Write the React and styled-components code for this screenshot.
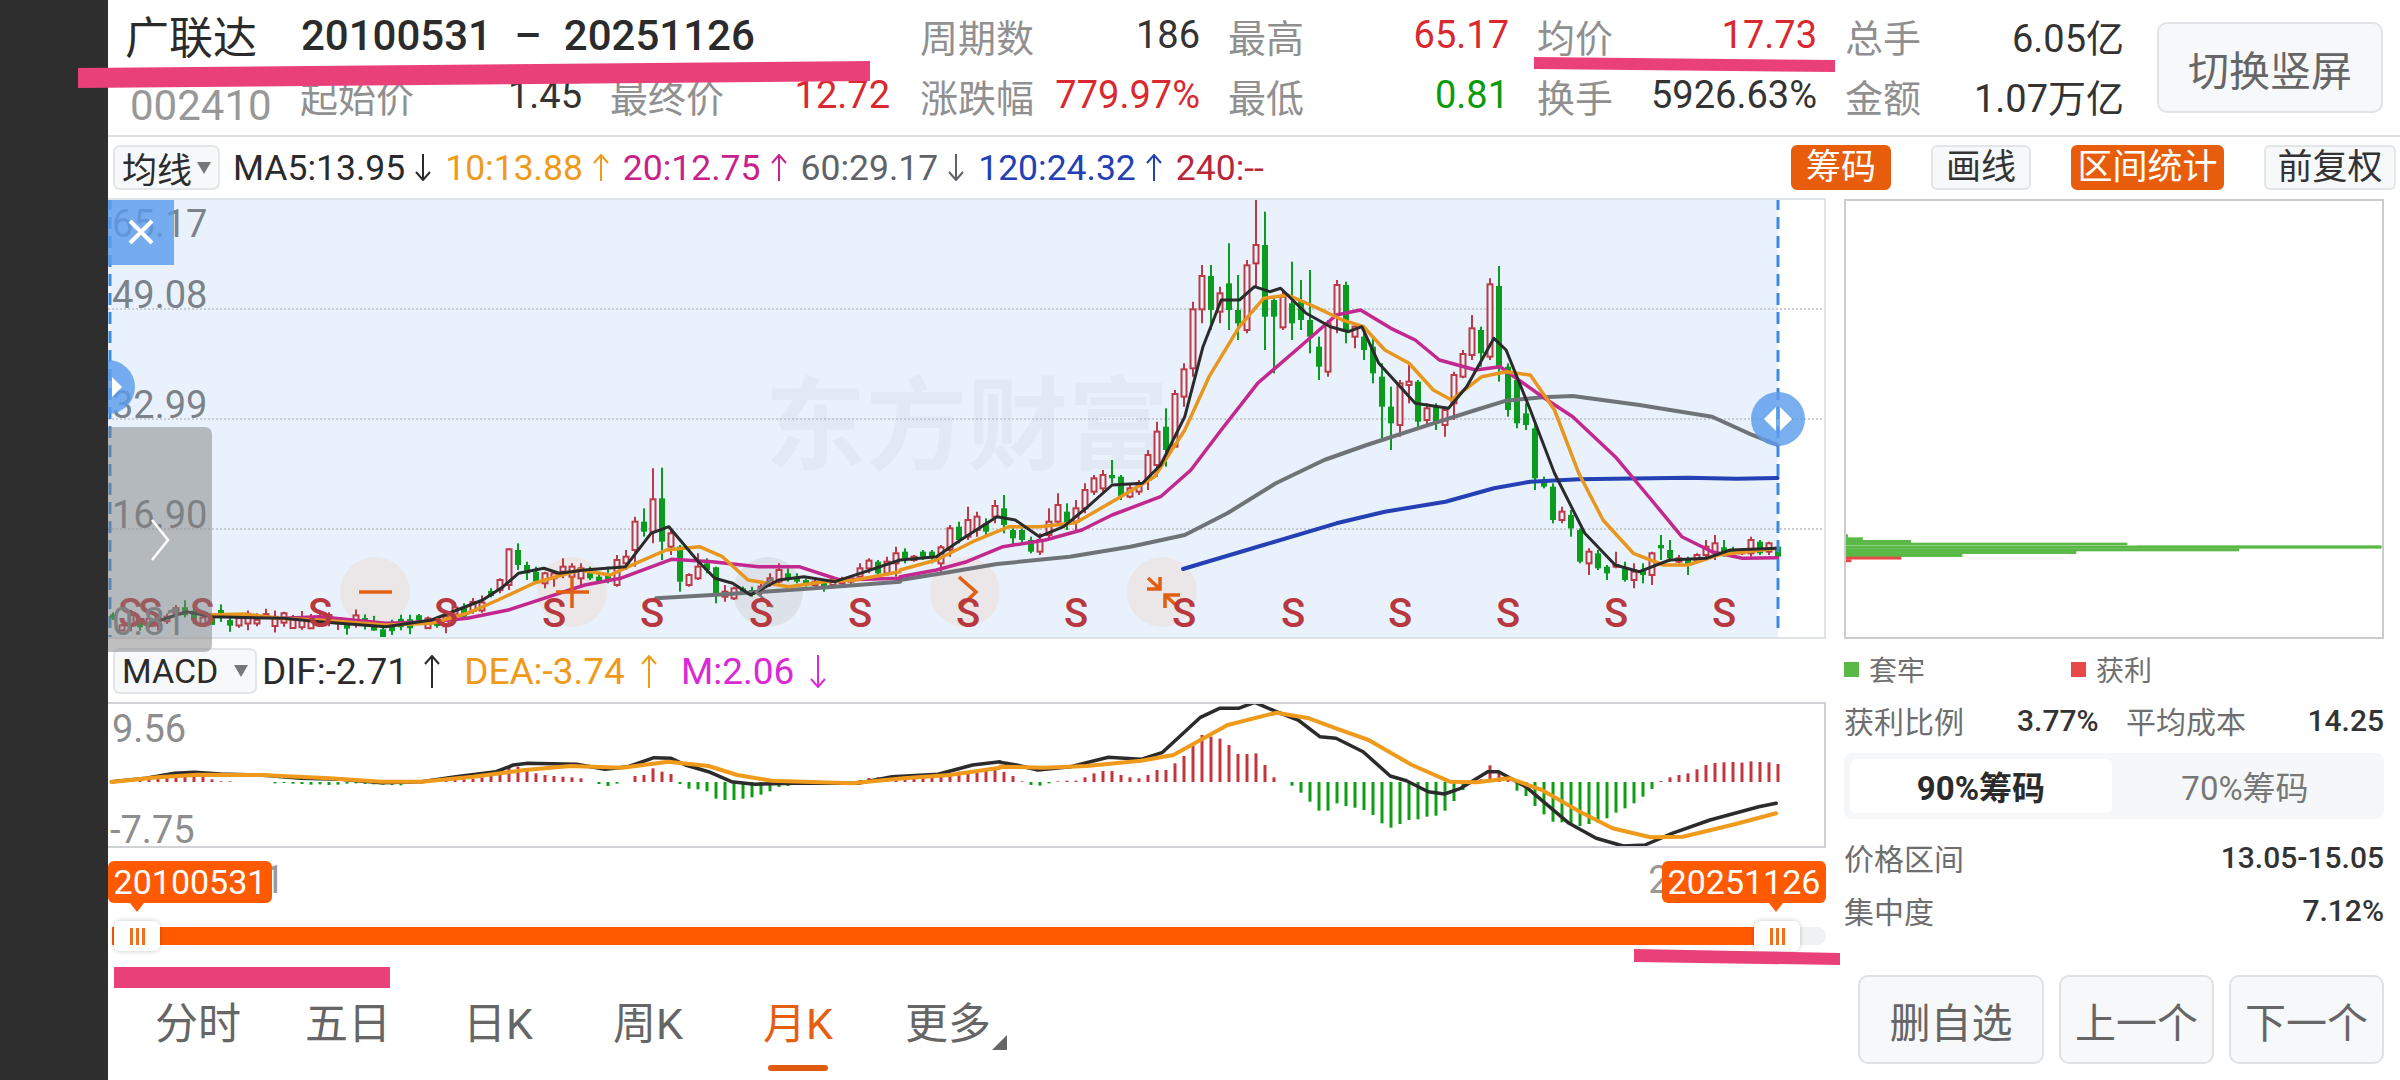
import React from "react";
import styled, { createGlobalStyle } from "styled-components";

const GlobalStyle = createGlobalStyle`
  html, body {
    margin: 0;
    width: 2400px;
    height: 1080px;
    overflow: hidden;
    background: #fff;
    font-family: Roboto, "Noto Sans CJK SC", sans-serif;
  }
  * { box-sizing: border-box; }
`;

// chart data is read off the reference, so it is kept in crop coordinates
const fromLeft = ([X, Y]) => [100 + X / 1.96, 190 + Y / 3];
const fromRight = ([X, Y]) => [900 + X / 1.65, 190 + Y / 3];
const macdLeft = ([X, Y]) => [100 + X / 1.742, 640 + Y / 3];
const macdRight = ([X, Y]) => [1000 + X / 1.845, 640 + Y / 3];

const ma5 = [
  ...[[100,1300],[170,1265],[220,1280],[360,1285],[430,1295],[560,1310],[650,1290],[750,1230],[790,1190],[820,1150],[870,1135],[900,1150],[950,1140],[1030,1130],[1080,1030],[1115,1010],[1170,1110],[1205,1165],[1240,1180],[1275,1215],[1330,1170],[1380,1160],[1440,1175],[1490,1150],[1568,1110]].map(fromLeft),
  ...[[0,1110],[60,1100],[100,1050],[160,980],[190,990],[230,1040],[270,1010],[310,950],[350,885],[400,880],[430,825],[470,680],[500,470],[530,330],[560,330],[585,290],[610,305],[628,295],[670,370],[710,410],[740,425],[762,410],[790,520],[820,580],[850,640],[905,655],[935,590],[980,445],[1000,480],[1040,660],[1080,850],[1130,1030],[1180,1125],[1220,1145],[1270,1110],[1330,1105],[1370,1080],[1448,1075]].map(fromRight),
];
const ma10 = [
  ...[[210,1275],[280,1272],[350,1285],[430,1290],[560,1305],[650,1300],[720,1270],[780,1230],[850,1180],[940,1140],[1000,1155],[1050,1120],[1110,1080],[1175,1070],[1220,1100],[1270,1170],[1350,1190],[1420,1175],[1480,1170],[1568,1145]].map(fromLeft),
  ...[[0,1140],[60,1110],[120,1055],[180,1010],[230,1010],[290,998],[360,925],[420,860],[470,720],[510,560],[560,410],[600,325],[640,315],[690,355],[730,390],[765,410],[800,480],[840,520],[880,600],[910,630],[960,560],[1000,545],[1040,555],[1080,660],[1120,850],[1160,990],[1210,1090],[1260,1125],[1300,1125],[1350,1095],[1448,1075]].map(fromRight),
];
const ma20 = [
  ...[[360,1285],[430,1280],[560,1300],[650,1295],[720,1285],[800,1260],[870,1225],[950,1185],[1020,1165],[1120,1108],[1200,1115],[1290,1130],[1370,1130],[1450,1170],[1568,1165]].map(fromLeft),
  ...[[0,1160],[60,1140],[110,1115],[170,1070],[240,1050],[300,1020],[350,975],[430,920],[480,840],[530,720],[590,580],[660,470],[720,375],[760,360],[810,415],[850,450],[890,510],[950,540],[990,530],[1060,620],[1110,680],[1180,800],[1240,930],[1290,1040],[1340,1085],[1390,1105],[1448,1103]].map(fromRight),
];
const ma60 = [
  ...[[1090,1225],[1200,1215],[1300,1205],[1400,1195],[1568,1175]].map(fromLeft),
  ...[[0,1170],[70,1150],[160,1122],[280,1100],[380,1070],[470,1035],[540,970],[620,880],[700,810],[770,765],[880,700],[950,660],[1000,632],[1060,622],[1110,618],[1220,645],[1340,680],[1400,730],[1448,765]].map(fromRight),
];
const ma120 = [[467,1137],[600,1065],[720,1000],[800,965],[900,935],[980,895],[1040,875],[1120,868],[1300,863],[1380,866],[1448,864]].map(fromRight);

// [isRed, X, wickTop, bodyTop, bodyBottom, wickBottom]
const leftCandles = [
  [1,781,1165,1170,1200,1210],[1,799,1075,1078,1185,1200],[0,816,1060,1080,1125,1140],[0,835,1115,1125,1150,1170],[0,852,1130,1145,1175,1180],
  [1,870,1145,1150,1180,1195],[1,887,1140,1150,1165,1190],[1,905,1105,1130,1145,1165],[1,922,1120,1130,1160,1170],[1,940,1120,1135,1165,1190],
  [0,958,1130,1140,1165,1170],[0,975,1150,1160,1175,1180],[0,993,1130,1155,1170,1180],[1,1010,1095,1110,1185,1190],[1,1028,1080,1100,1120,1140],
  [1,1045,980,995,1080,1130],[0,1062,955,995,1025,1040],[1,1080,835,928,1025,1060],[0,1098,833,925,1055,1110],[1,1115,1020,1030,1070,1095],
  [0,1135,1065,1070,1175,1205],[1,1152,1150,1155,1185,1190],[1,1168,1090,1130,1165,1170],[0,1187,1105,1120,1140,1150],[0,1205,1130,1132,1210,1240],
  [1,1222,1185,1205,1220,1235],[1,1240,1190,1195,1225,1230],[0,1258,1190,1195,1205,1210],[0,1275,1190,1200,1215,1220],[1,1293,1180,1190,1205,1215],
  [1,1310,1150,1165,1180,1190],[1,1328,1120,1140,1175,1180],[0,1346,1135,1150,1165,1175],[0,1364,1150,1160,1175,1180],[0,1381,1165,1170,1185,1190],
  [1,1399,1170,1175,1185,1190],[0,1416,1170,1175,1195,1205],[1,1434,1165,1170,1185,1190],[1,1452,1160,1170,1180,1185],[1,1470,1155,1165,1175,1185],
  [1,1487,1120,1135,1160,1170],[1,1505,1105,1112,1135,1150],[0,1522,1110,1115,1150,1160],[1,1540,1100,1115,1150,1155],[1,1555,1070,1090,1120,1160],
];
const rightCandles = [
  [0,5,1075,1085,1105,1120],[1,20,1095,1100,1110,1115],[0,34,1080,1085,1100,1110],[0,50,1080,1085,1100,1120],[1,65,1065,1072,1120,1155],
  [1,80,1005,1015,1080,1100],[0,95,995,1010,1050,1060],[1,110,950,990,1040,1050],[1,125,965,980,1020,1040],[0,140,985,1000,1025,1040],
  [1,155,930,948,980,1000],[0,170,915,955,1005,1030],[0,185,1005,1020,1045,1065],[0,200,1015,1020,1050,1060],[0,215,1040,1050,1085,1090],
  [1,230,1030,1050,1085,1095],[1,244,955,995,1035,1050],[1,259,910,945,995,1000],[0,273,940,965,1000,1020],[1,288,930,955,995,1020],
  [1,303,880,900,955,970],[1,318,855,865,905,915],[1,333,840,855,895,905],[0,347,810,855,865,880],[0,362,855,860,920,930],
  [1,378,885,895,920,925],[1,392,870,880,905,915],[1,407,780,795,870,900],[1,422,695,725,825,860],[0,437,655,710,780,830],
  [1,452,600,612,770,770],[1,467,520,538,620,650],[1,482,335,358,535,560],[1,496,225,258,358,400],[0,511,225,258,360,420],
  [1,526,290,310,365,400],[0,541,160,280,360,420],[0,556,255,360,400,450],[1,570,210,226,420,430],[1,585,28,165,220,290],
  [0,600,65,165,380,480],[0,614,320,330,380,550],[1,630,300,320,412,420],[0,644,215,340,400,450],[0,659,270,330,390,420],
  [0,674,240,390,440,490],[0,689,440,470,530,570],[1,704,390,400,545,560],[1,719,270,285,375,430],[0,734,275,285,420,460],
  [1,748,400,410,440,475],[0,764,420,440,480,510],[0,779,440,470,550,580],[0,794,520,560,650,750],[0,808,590,650,700,780],
  [1,823,570,580,705,740],[1,838,520,575,585,640],[0,853,570,575,695,720],[1,868,640,655,690,710],[0,882,640,650,700,720],
  [1,897,650,660,705,740],[1,912,545,555,640,690],[1,927,480,492,560,565],[1,942,375,415,495,510],[0,956,410,420,490,530],
  [1,971,265,283,500,510],[0,986,228,288,530,575],[0,1001,520,530,660,680],[0,1015,560,570,700,715],[0,1032,640,670,705,720],
  [0,1046,700,715,865,900],[0,1062,860,870,890,895],[0,1076,880,890,990,1000],[1,1091,950,965,990,1000],[0,1105,960,975,1015,1040],
  [0,1121,1015,1020,1115,1120],[1,1135,1075,1085,1120,1155],[0,1150,1080,1090,1135,1140],[0,1164,1125,1130,1150,1170],[1,1180,1085,1125,1130,1135],
  [0,1194,1115,1135,1170,1175],[1,1209,1120,1145,1170,1195],[0,1224,1120,1140,1155,1180],[1,1239,1085,1090,1155,1185],[0,1254,1035,1065,1075,1110],
  [0,1268,1050,1080,1105,1115],[1,1283,1095,1105,1115,1120],[0,1298,1100,1110,1125,1155],[1,1313,1090,1095,1110,1120],[1,1328,1050,1070,1095,1110],
  [1,1342,1035,1060,1090,1110],[0,1357,1050,1072,1090,1100],[0,1372,1070,1080,1090,1100],[1,1387,1075,1080,1090,1095],[1,1402,1040,1050,1090,1100],
  [0,1417,1050,1055,1090,1095],[1,1432,1055,1060,1085,1095],[0,1447,1060,1070,1100,1105],
];

const candleX = i => 113 + 9 * i;
const noise = n => {
  const v = Math.sin(n * 12.9898) * 43758.5453;
  return v - Math.floor(v);
};
const lineY = (line, x) => {
  for (let i = 1; i < line.length; i++) {
    if (x <= line[i][0]) {
      const [x0, y0] = line[i - 1];
      const [x1, y1] = line[i];
      return y0 + ((y1 - y0) * (x - x0)) / (x1 - x0 || 1);
    }
  }
  return line[line.length - 1][1];
};

const buildCandles = () => {
  const byIndex = {};
  const add = (rows, convert) =>
    rows.forEach(([red, X, a, b, c, d]) => {
      const [x] = convert([X, 0]);
      const i = Math.round((x - 113) / 9);
      byIndex[i] = {
        red: !!red,
        wickTop: convert([X, a])[1],
        top: convert([X, b])[1],
        bottom: convert([X, c])[1],
        wickBottom: convert([X, d])[1],
      };
    });
  add(leftCandles, fromLeft);
  add(rightCandles, fromRight);

  const out = [];
  for (let i = 0; i < 186; i++) {
    if (byIndex[i]) {
      out.push({ ...byIndex[i], x: candleX(i) });
      continue;
    }
    const base = lineY(ma5, Math.max(candleX(i), 151));
    const top = base - 3 + (noise(i) - 0.5) * 12;
    const bottom = top + 3 + noise(i + 300) * 7;
    out.push({
      x: candleX(i),
      red: noise(i + 600) < 0.55,
      wickTop: top - noise(i + 900) * 7,
      top,
      bottom,
      wickBottom: Math.min(bottom + noise(i + 1200) * 7, 635),
    });
  }
  return out;
};
const candles = buildCandles();

const toPoints = line => line.map(([x, y]) => `${x.toFixed(1)},${y.toFixed(1)}`).join(" ");

// histogram heights in crop units, index 0 sits at x = 113
const macdBars = [
  2,3,4,6,8,10,18,20,21,22,20,8,2,2,0,0,0,0,-4,-3,-5,-6,-8,-7,-9,-8,-5,-4,-6,-7,-8,-9,-10,-4,0,1,
  3,4,6,8,10,14,20,30,46,46,36,26,21,18,16,14,11,0,-6,-12,-5,0,18,21,41,31,24,-6,-20,-22,-28,-50,-54,-54,-50,-46,-38,-28,-15,-12,-6,-4,-6,-4,-2,-2,0,6,12,14,16,21,16,18,19,19,26,26,31,31,34,38,41,
  30,18,2,-9,-11,-4,2,4,4,14,26,33,33,21,14,11,21,36,36,56,78,111,141,136,130,111,84,84,86,51,14,0,-11,-32,-59,-86,-86,-64,-72,-77,-84,-99,-124,-137,-126,-114,-112,-104,-101,-86,-57,-24,4,8,50,34,16,-26,-42,-72,-97,-119,-121,-129,-132,-126,-122,-109,-92,-79,-64,-44,-21,3,14,21,26,38,51,57,59,60,58,62,60,59,54,
];
const difLine = [
  ...[[20,425],[80,415],[130,400],[165,397],[210,402],[280,405],[350,415],[420,418],[490,428],[560,425],[620,410],[690,395],[720,375],[745,370],[830,373],[880,388],[920,380],[965,353],[995,355],[1020,375],[1060,395],[1100,425],[1140,433],[1210,430],[1320,430],[1380,410],[1460,403],[1520,375],[1568,365]].map(macdLeft),
  ...[[0,367],[30,375],[70,390],[130,380],[200,352],[260,358],[300,337],[370,232],[405,205],[440,205],[470,187],[510,215],[550,240],[590,290],[620,295],[670,335],[720,408],[750,422],[790,455],[820,462],[850,445],[900,395],[920,395],[970,440],[1050,550],[1100,595],[1150,618],[1190,615],[1240,580],[1310,540],[1400,500],[1432,490]].map(macdRight),
];
const deaLine = [
  ...[[20,426],[100,412],[170,404],[280,405],[400,415],[490,425],[560,425],[650,410],[740,390],[820,378],[910,383],[990,365],[1060,378],[1110,405],[1170,422],[1310,430],[1400,415],[1480,405],[1568,383]].map(macdLeft),
  ...[[0,380],[80,383],[160,378],[260,362],[320,345],[420,255],[510,218],[570,235],[620,265],[680,300],[760,375],[830,425],[880,427],[940,415],[1000,450],[1070,515],[1130,565],[1200,592],[1260,590],[1350,555],[1432,520]].map(macdRight),
];

const chipRows = [
  [1033, 1042, 78], [1042, 1050, 118], [1050, 1058, 248], [1058, 1066, 833], [1066, 1075, 1520],
  [1075, 1083, 1135], [1083, 1091, 695], [1091, 1100, 387],
];
const chipRedRows = [[1100, 1108, 222], [1108, 1116, 87]];

const sMarks = [130, 150, 202, 320, 446, 554, 652, 761, 860, 968, 1076, 1184, 1293, 1400, 1508, 1616, 1724];
const priceLabels = [["65.17", 237], ["49.08", 308], ["32.99", 418], ["16.90", 528], ["0.81", 635]];
const maItems = [
  { text: "MA5:13.95", color: "#2b2b2b", dir: "down" },
  { text: "10:13.88", color: "#ef9a1a", dir: "up" },
  { text: "20:12.75", color: "#c9218c", dir: "up" },
  { text: "60:29.17", color: "#5f6368", dir: "down" },
  { text: "120:24.32", color: "#2340b4", dir: "up" },
];
const macdItems = [
  { text: "DIF:-2.71", color: "#2b2b2b", dir: "up" },
  { text: "DEA:-3.74", color: "#ef9a1a", dir: "up" },
  { text: "M:2.06", color: "#d92ad6", dir: "down" },
];
const periods = ["分时", "五日", "日K", "周K", "月K", "更多"];

const Page = styled.div`
  position: relative;
  display: flex;
  width: 2400px;
  height: 1080px;
  overflow: hidden;
  background: #fff;
`;
const Rail = styled.div`
  position: relative;
  z-index: 6;
  flex: 0 0 108px;
  background: #2e2e2e;
`;
const Main = styled.div`
  flex: 1;
  min-width: 0;
  display: flex;
  flex-direction: column;
`;
const Header = styled.header`
  height: 137px;
  flex: none;
  display: flex;
  align-items: flex-start;
  padding: 5px 16px 0 17px;
  border-bottom: 2px solid #dcdfe3;
`;
const Identity = styled.div`
  width: 770px;
  flex: none;
`;
const TitleRow = styled.div`
  display: flex;
  align-items: center;
  height: 60px;
  color: #2b2b2b;
`;
const Name = styled.span`
  font-size: 44px;
  width: 176px;
`;
const Dates = styled.span`
  font-size: 42px;
  font-weight: 500;
  word-spacing: 12px;
  white-space: pre;
`;
const SubRow = styled.div`
  display: flex;
  align-items: center;
  height: 60px;
  padding-left: 5px;
`;
const Code = styled.span`
  width: 170px;
  font-size: 42px;
  color: #989898;
  padding-top: 20px;
`;
const StatGrid = styled.div`
  display: grid;
  grid-template-columns: 280px 281px 280px 279px;
  grid-auto-rows: 60px;
  column-gap: 28px;
  margin-left: 25px;
`;
const Pair = styled.div`
  display: flex;
  align-items: center;
  justify-content: space-between;
  font-size: 38px;
  width: ${p => p.$width || "auto"};
  margin-right: ${p => p.$gap || "0"};
`;
const Label = styled.span`
  color: #909090;
`;
const Value = styled.span`
  color: ${p => p.$color || "#333"};
`;
const BigButton = styled.button`
  flex: none;
  margin: 17px 0 0 33px;
  width: 226px;
  height: 91px;
  border: 2px solid #e1e3e6;
  border-radius: 10px;
  background: #f7f8fa;
  color: #666;
  font: inherit;
  font-size: 41px;
  padding: 0;
`;

const Toolbar = styled.div`
  height: 61px;
  flex: none;
  display: flex;
  align-items: center;
  padding: 0 4px 0 5px;
`;
const Select = styled.div`
  flex: none;
  display: flex;
  align-items: center;
  justify-content: space-between;
  width: ${p => p.$width};
  height: ${p => p.$height};
  margin-right: ${p => p.$gap};
  padding: 0 ${p => p.$pad};
  border: 2px solid #e3e5e8;
  border-radius: 7px;
  background: #f7f8fa;
  color: #2b2b2b;
  font-size: ${p => p.$size};
`;
const Caret = styled.i`
  width: 0;
  height: 0;
  border-left: 7px solid transparent;
  border-right: 7px solid transparent;
  border-top: 12px solid #777;
`;
const Reading = styled.span`
  flex: none;
  color: ${p => p.$color};
  font-size: ${p => p.$size};
  white-space: nowrap;
`;
const ArrowMark = styled.svg`
  flex: none;
  margin: 0 ${p => p.$after} 0 ${p => p.$before};
`;
const ToolButtons = styled.div`
  margin-left: auto;
  display: flex;
  gap: 40px;
`;
const ToolButton = styled.button`
  width: ${p => p.$width};
  height: 45px;
  padding: 0;
  border-radius: 6px;
  border: 2px solid ${p => (p.$active ? "#e85d0c" : "#e3e5e8")};
  background: ${p => (p.$active ? "#e85d0c" : "#f7f8fa")};
  color: ${p => (p.$active ? "#fff" : "#333")};
  font: inherit;
  font-size: 35px;
  line-height: 1;
`;

const Body = styled.div`
  flex: none;
  display: grid;
  grid-template-columns: 1718px 1fr;
  align-items: start;
`;
const LeftStack = styled.section`
  min-width: 0;
`;
const RightStack = styled.aside`
  min-width: 0;
  padding: 0 16px 0 18px;
`;

const PriceFrame = styled.div`
  position: relative;
  height: 441px;
  &::after {
    content: "";
    position: absolute;
    inset: 0;
    border: 2px solid #dfe3e8;
    border-left: none;
    pointer-events: none;
  }
`;
const Plot = styled.svg`
  display: block;
  width: 100%;
  height: 100%;
  font-family: Roboto, "Noto Sans CJK SC", sans-serif;
`;
const CloseBox = styled.div`
  position: absolute;
  left: 0;
  top: 1px;
  width: 66px;
  height: 66px;
  display: flex;
  align-items: center;
  justify-content: center;
  background: rgba(92, 156, 236, 0.82);
`;
const RoundHandle = styled.div`
  position: absolute;
  top: ${p => p.$top};
  left: ${p => p.$left};
  width: 54px;
  height: 54px;
  border-radius: 50%;
  display: flex;
  align-items: center;
  justify-content: center;
  background: rgba(92, 156, 236, 0.82);
`;
const ExpandPanel = styled.div`
  position: absolute;
  z-index: 4;
  left: 0;
  top: 229px;
  width: 104px;
  height: 225px;
  display: flex;
  align-items: center;
  justify-content: center;
  border-radius: 0 7px 7px 0;
  background: rgba(128, 128, 128, 0.5);
`;

const MacdBar = styled.div`
  height: 63px;
  display: flex;
  align-items: center;
  padding-left: 5px;
  padding-top: 1px;
`;
const MacdFrame = styled.div`
  position: relative;
  height: 146px;
  &::after {
    content: "";
    position: absolute;
    inset: 0;
    border: 2px solid #cfd1d4;
    border-left: none;
    pointer-events: none;
  }
`;
const AxisRow = styled.div`
  position: relative;
  height: 73px;
  display: flex;
  justify-content: space-between;
  padding: 0 7px 0 6px;
  color: #999;
  font-size: 38px;
  line-height: 64px;
`;
const DateTip = styled.div`
  position: absolute;
  top: 13px;
  ${p => (p.$end ? "right: 0;" : "left: 0;")}
  width: 164px;
  height: 42px;
  border-radius: 6px;
  background: #ff5a00;
  color: #fff;
  font-size: 34px;
  line-height: 42px;
  text-align: center;
  &::after {
    content: "";
    position: absolute;
    top: 42px;
    left: ${p => (p.$end ? "107px" : "22px")};
    border-left: 7px solid transparent;
    border-right: 7px solid transparent;
    border-top: 9px solid #ff5a00;
  }
`;
const SliderRow = styled.div`
  position: relative;
  height: 30px;
  padding: 6px 0 6px 4px;
`;
const Track = styled.div`
  height: 18px;
  border-radius: 9px;
  background: #f0f1f3;
`;
const TrackFill = styled.div`
  height: 100%;
  background: #ff5a00;
`;
const Thumb = styled.div`
  position: absolute;
  top: 0;
  left: ${p => p.$left};
  width: 46px;
  height: 30px;
  display: flex;
  align-items: center;
  justify-content: center;
  gap: 3px;
  border-radius: 6px;
  background: #fff;
  box-shadow: 0 0 5px rgba(0, 0, 0, 0.22);
`;
const Grip = styled.i`
  width: 3px;
  height: 17px;
  background: #f0701e;
`;

const ChipFrame = styled.div`
  position: relative;
  height: 441px;
  &::after {
    content: "";
    position: absolute;
    inset: 1px 0 0;
    border: 2px solid #cccccc;
    pointer-events: none;
  }
`;
const Legend = styled.div`
  display: flex;
  margin-top: 10px;
  height: 40px;
  align-items: center;
  font-size: 28px;
  color: #707070;
`;
const LegendItem = styled.div`
  width: 227px;
  display: flex;
  align-items: center;
  gap: 10px;
`;
const Swatch = styled.i`
  width: 15px;
  height: 15px;
  background: ${p => p.$color};
`;
const StatRow = styled.div`
  display: grid;
  grid-template-columns: ${p => p.$columns || "1fr auto"};
  align-items: center;
  height: 40px;
  margin-top: ${p => p.$top};
  font-size: 30px;
  color: #6e6e6e;
`;
const StatNumber = styled.span`
  color: #333;
  font-weight: 500;
`;
const RangeTabs = styled.div`
  display: flex;
  height: 66px;
  margin-top: 15px;
  padding: 6px;
  border-radius: 8px;
  background: #f6f7f9;
`;
const RangeTab = styled.div`
  width: 262px;
  border-radius: 6px;
  display: flex;
  align-items: center;
  justify-content: center;
  font-size: 33px;
  background: ${p => (p.$active ? "#fff" : "transparent")};
  color: ${p => (p.$active ? "#2b2b2b" : "#777")};
  font-weight: ${p => (p.$active ? 700 : 400)};
  & + & {
    flex: 1;
  }
`;

const Footer = styled.footer`
  flex: 1;
  display: flex;
  justify-content: space-between;
  padding: 0 16px 0 15px;
`;
const Periods = styled.nav`
  display: flex;
  padding-top: 43px;
`;
const Period = styled.div`
  position: relative;
  width: 150px;
  display: flex;
  flex-direction: column;
  align-items: center;
  font-size: 43px;
  line-height: 60px;
  color: ${p => (p.$active ? "#e4600f" : "#666")};
`;
const PeriodMark = styled.i`
  width: 60px;
  height: 6px;
  margin-top: 11px;
  border-radius: 3px;
  background: #e05a10;
`;
const MoreCaret = styled.i`
  position: absolute;
  left: 119px;
  top: 41px;
  width: 0;
  height: 0;
  border-left: 15px solid transparent;
  border-bottom: 15px solid #666;
`;
const FooterButtons = styled.div`
  display: flex;
  gap: 15px;
  padding-top: 24px;
`;
const FooterButton = styled.button`
  width: ${p => p.$width};
  height: 89px;
  padding: 0;
  border: 2px solid #dfe1e4;
  border-radius: 10px;
  background: #f7f8fa;
  color: #666;
  font: inherit;
  font-size: 41px;
`;

const Marker = styled.svg`
  position: absolute;
  inset: 0;
  z-index: 8;
  pointer-events: none;
`;

const Arrow = ({ dir, color, height = 27, before = "8px", after = "12px" }) => (
  <ArrowMark $before={before} $after={after} width="20" height={height} viewBox={`0 0 20 ${height}`} fill="none" stroke={color} strokeWidth="2">
    {dir === "up" ? (
      <path d={`M10 1V${height}M3 9L10 1L17 9`} />
    ) : (
      <path d={`M10 0V${height - 1}M3 ${height - 9}L10 ${height - 1}L17 ${height - 9}`} />
    )}
  </ArrowMark>
);

const PriceChart = () => (
  <PriceFrame>
    <Plot viewBox="108 198 1718 441" preserveAspectRatio="none">
      <rect x="108" y="198" width="1670" height="441" fill="#e9f2fc" />
      {[309, 419, 529].map(y => (
        <line key={y} x1="108" x2="1826" y1={y} y2={y} stroke="#c9cdd2" strokeWidth="2" strokeDasharray="2 2" />
      ))}
      <text x="765" y="462" fontSize="101" fontWeight="700" fill="rgba(165,175,185,0.11)">东方财富</text>
      <line x1="110" x2="110" y1="198" y2="638" stroke="#3d8bdc" strokeWidth="3" strokeDasharray="12 7" />
      <circle cx="375" cy="592" r="35" fill="#ebe7e8" />
      <circle cx="572" cy="592" r="35" fill="#ebe7e8" />
      <circle cx="768" cy="592" r="35" fill="#dde2ea" />
      <circle cx="965" cy="592" r="35" fill="#ebe7e8" />
      <circle cx="1162" cy="592" r="35" fill="#ebe7e8" />
      {candles.map(c =>
        c.red ? (
          <g key={c.x} stroke="#bb3a45" strokeWidth="2">
            <line x1={c.x} x2={c.x} y1={c.wickTop} y2={c.top} />
            <line x1={c.x} x2={c.x} y1={c.bottom} y2={c.wickBottom} />
            <rect x={c.x - 2.5} y={c.top} width="5" height={c.bottom - c.top} fill="#e9f2fc" />
          </g>
        ) : (
          <g key={c.x} fill="#0a9b1f">
            <rect x={c.x - 1} y={c.wickTop} width="2" height={c.wickBottom - c.wickTop} />
            <rect x={c.x - 3} y={c.top} width="6" height={c.bottom - c.top} />
          </g>
        )
      )}
      <g fill="none" strokeLinejoin="round" strokeLinecap="round">
        <polyline points={toPoints(ma120)} stroke="#2340b4" strokeWidth="4" />
        <polyline points={toPoints(ma60)} stroke="#6f7378" strokeWidth="4" />
        <polyline points={toPoints(ma20)} stroke="#c2288e" strokeWidth="3.5" />
        <polyline points={toPoints(ma10)} stroke="#e8961e" strokeWidth="3.5" />
        <polyline points={toPoints(ma5)} stroke="#2b2b2b" strokeWidth="3" />
      </g>
      <g fill="none" stroke="#e05f10" strokeWidth="3.5">
        <path d="M359 592H392" />
        <path d="M556 592H589M572 576V608" />
        <path d="M773 578L756 592L773 607" stroke="#777b80" strokeWidth="2.5" />
        <path d="M959 577L976 592L960 607" />
        <path d="M1160 577V589H1147M1148 578L1160 589M1165 608V595H1180M1165 595L1178 607" />
      </g>
      {sMarks.map(x => (
        <text key={x} x={x} y="627" fontSize="40" fontWeight="500" fill="#b8383f" textAnchor="middle">S</text>
      ))}
      {priceLabels.map(([text, y]) => (
        <text key={text} x="112" y={y} fontSize="38" fill="#7b8289">{text}</text>
      ))}
      <line x1="1778" x2="1778" y1="198" y2="628" stroke="#3d8bdc" strokeWidth="3" strokeDasharray="12 7" />
    </Plot>
    <CloseBox>
      <svg width="30" height="30" viewBox="0 0 30 30" stroke="#fff" strokeWidth="4">
        <path d="M4 4L26 26M26 4L4 26" />
      </svg>
    </CloseBox>
    <RoundHandle $left="-27px" $top="162px">
      <svg width="54" height="54" viewBox="0 0 54 54" fill="#fff">
        <path d="M31 17L41 27L31 37Z" />
      </svg>
    </RoundHandle>
    <RoundHandle $left="1643px" $top="194px">
      <svg width="34" height="30" viewBox="0 0 34 30" fill="#fff">
        <path d="M15 3V27L3 15Z" />
        <path d="M19 3V27L31 15Z" />
      </svg>
    </RoundHandle>
    <ExpandPanel>
      <svg width="20" height="42" viewBox="0 0 20 42" fill="none" stroke="#fff" strokeWidth="2.5">
        <path d="M2 1L18 21L2 41" />
      </svg>
    </ExpandPanel>
  </PriceFrame>
);

const MacdChart = () => (
  <MacdFrame>
    <Plot viewBox="108 702 1718 146" preserveAspectRatio="none">
      <text x="112" y="742" fontSize="38" fill="#8e8e8e">9.56</text>
      <text x="110" y="843" fontSize="38" fill="#8e8e8e">-7.75</text>
      {macdBars.map((h, i) =>
        h === 0 ? null : (
          <rect
            key={i}
            x={candleX(i) - 1.5}
            y={h > 0 ? 782 - h / 3 : 782}
            width="3"
            height={Math.abs(h) / 3}
            fill={h > 0 ? "#c4363f" : "#0f9d16"}
          />
        )
      )}
      <g fill="none" strokeLinejoin="round" strokeLinecap="round">
        <polyline points={toPoints(difLine)} stroke="#2b2b2b" strokeWidth="3.5" />
        <polyline points={toPoints(deaLine)} stroke="#ef9a1a" strokeWidth="4" />
      </g>
    </Plot>
  </MacdFrame>
);

const ChipChart = () => (
  <ChipFrame>
    <Plot viewBox="1844 198 540 441" preserveAspectRatio="none">
      {chipRows.map(([a, b, X]) => (
        <rect key={a} x="1844" y={190 + a / 3} width={X / 2.703 - 24.8} height={(b - a) / 3 + 0.3} fill="#5ab946" />
      ))}
      {chipRedRows.map(([a, b, X]) => (
        <rect key={a} x="1844" y={190 + a / 3} width={X / 2.703 - 24.8} height={(b - a) / 3 + 0.2} fill="#e84848" />
      ))}
      <rect x="1844" y="545.2" width="293" height="0.8" fill="rgba(255,255,255,0.35)" />
    </Plot>
  </ChipFrame>
);

const App = () => (
  <Page>
    <GlobalStyle />
    <Rail />
    <Main>
      <Header>
        <Identity>
          <TitleRow>
            <Name>广联达</Name>
            <Dates>{"20100531 – 20251126"}</Dates>
          </TitleRow>
          <SubRow>
            <Code>002410</Code>
            <Pair $width="282px" $gap="28px"><Label>起始价</Label><Value>1.45</Value></Pair>
            <Pair $width="280px"><Label>最终价</Label><Value $color="#d9282f">12.72</Value></Pair>
          </SubRow>
        </Identity>
        <StatGrid>
          <Pair><Label>周期数</Label><Value>186</Value></Pair>
          <Pair><Label>最高</Label><Value $color="#d9282f">65.17</Value></Pair>
          <Pair><Label>均价</Label><Value $color="#d9282f">17.73</Value></Pair>
          <Pair><Label>总手</Label><Value>6.05亿</Value></Pair>
          <Pair><Label>涨跌幅</Label><Value $color="#d9282f">779.97%</Value></Pair>
          <Pair><Label>最低</Label><Value $color="#0a9a0a">0.81</Value></Pair>
          <Pair><Label>换手</Label><Value>5926.63%</Value></Pair>
          <Pair><Label>金额</Label><Value>1.07万亿</Value></Pair>
        </StatGrid>
        <BigButton>切换竖屏</BigButton>
      </Header>

      <Toolbar>
        <Select $width="107px" $height="45px" $gap="13px" $pad="7px" $size="35px">
          均线<Caret />
        </Select>
        {maItems.map(item => (
          <React.Fragment key={item.text}>
            <Reading $color={item.color} $size="35.5px">{item.text}</Reading>
            <Arrow dir={item.dir} color={item.color} />
          </React.Fragment>
        ))}
        <Reading $color="#b8263a" $size="35.5px">240:--</Reading>
        <ToolButtons>
          <ToolButton $active $width="100px">筹码</ToolButton>
          <ToolButton $width="100px">画线</ToolButton>
          <ToolButton $active $width="153px">区间统计</ToolButton>
          <ToolButton $width="132px">前复权</ToolButton>
        </ToolButtons>
      </Toolbar>

      <Body>
        <LeftStack>
          <PriceChart />
          <MacdBar>
            <Select $width="144px" $height="46px" $gap="5px" $pad="7px" $size="34px">
              MACD<Caret />
            </Select>
            {macdItems.map(item => (
              <React.Fragment key={item.text}>
                <Reading $color={item.color} $size="37px">{item.text}</Reading>
                <Arrow dir={item.dir} color={item.color} height={33} before="14px" after="22px" />
              </React.Fragment>
            ))}
          </MacdBar>
          <MacdChart />
          <AxisRow>
            <span>20100531</span>
            <span>20251126</span>
            <DateTip>20100531</DateTip>
            <DateTip $end>20251126</DateTip>
          </AxisRow>
          <SliderRow>
            <Track>
              <TrackFill style={{ width: `${(1642 / 1714) * 100}%` }} />
            </Track>
            <Thumb $left="6px"><Grip /><Grip /><Grip /></Thumb>
            <Thumb $left="1646px"><Grip /><Grip /><Grip /></Thumb>
          </SliderRow>
        </LeftStack>

        <RightStack>
          <ChipChart />
          <Legend>
            <LegendItem><Swatch $color="#5ab946" />套牢</LegendItem>
            <LegendItem><Swatch $color="#e84848" />获利</LegendItem>
          </Legend>
          <StatRow $top="9px" $columns="173px 109px 1fr auto">
            <span>获利比例</span>
            <StatNumber>3.77%</StatNumber>
            <span>平均成本</span>
            <StatNumber>14.25</StatNumber>
          </StatRow>
          <RangeTabs>
            <RangeTab $active>90%筹码</RangeTab>
            <RangeTab>70%筹码</RangeTab>
          </RangeTabs>
          <StatRow $top="16px">
            <span>价格区间</span>
            <StatNumber>13.05-15.05</StatNumber>
          </StatRow>
          <StatRow $top="13px">
            <span>集中度</span>
            <StatNumber>7.12%</StatNumber>
          </StatRow>
        </RightStack>
      </Body>

      <Footer>
        <Periods>
          {periods.map(label => (
            <Period key={label} $active={label === "月K"}>
              {label}
              {label === "月K" && <PeriodMark />}
              {label === "更多" && <MoreCaret />}
            </Period>
          ))}
        </Periods>
        <FooterButtons>
          <FooterButton $width="186px">删自选</FooterButton>
          <FooterButton $width="155px">上一个</FooterButton>
          <FooterButton $width="155px">下一个</FooterButton>
        </FooterButtons>
      </Footer>
    </Main>

    <Marker width="2400" height="1080" viewBox="0 0 2400 1080" fill="#ea4079">
      <polygon points="78,68 870,61 870,81 78,88" />
      <polygon points="1534,57 1835,60 1835,72 1534,69" />
      <polygon points="114,967 390,967 390,988 114,988" />
      <polygon points="1634,949 1840,953 1840,965 1634,962" />
    </Marker>
  </Page>
);

export default App;
